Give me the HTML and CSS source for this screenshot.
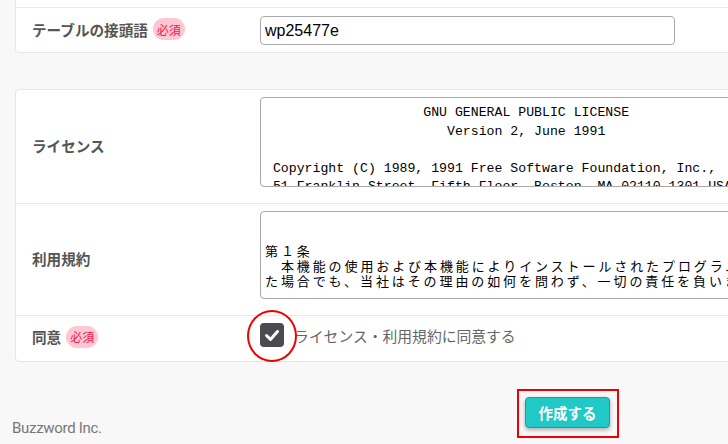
FILE: index.html
```html
<!DOCTYPE html>
<html lang="ja">
<head>
  <meta charset="UTF-8">
  <title>インストール設定</title>
  <link rel="stylesheet" href="styles.css">
</head>
<body>
  <div class="page">
    <section class="card card-top">
      <div class="row row-cut"></div>
      <div class="row row-input">
        <div class="row-label">テーブルの接頭語 <span class="badge">必須</span></div>
        <div class="row-value">
          <input type="text" class="text-input" value="wp25477e">
        </div>
      </div>
    </section>

    <section class="card">
      <div class="row row-tall">
        <div class="row-label">ライセンス</div>
        <div class="row-value">
          <textarea class="box-text license" readonly>                    GNU GENERAL PUBLIC LICENSE
                       Version 2, June 1991

 Copyright (C) 1989, 1991 Free Software Foundation, Inc.,
 51 Franklin Street, Fifth Floor, Boston, MA 02110-1301 USA
 Everyone is permitted to copy and distribute verbatim copies
 of this license document, but changing it is not allowed.</textarea>
        </div>
      </div>
      <div class="row row-tall">
        <div class="row-label">利用規約</div>
        <div class="row-value">
          <textarea class="box-text terms" readonly>


第１条
　本機能の使用および本機能によりインストールされたプログラムの使用により損害が発生し
た場合でも、当社はその理由の如何を問わず、一切の責任を負いません。</textarea>
        </div>
      </div>
      <div class="row row-agree">
        <div class="row-label">同意 <span class="badge">必須</span></div>
        <div class="row-value">
          <label class="agree">
            <span class="check-box">
              <svg width="24" height="24" viewBox="0 0 24 24">
                <polyline points="6.5,12.5 10.5,16.5 17.5,8.5" fill="none" stroke="#fff" stroke-width="3" stroke-linecap="round" stroke-linejoin="round"/>
              </svg>
              <span class="mark-circle"></span>
            </span>
            ライセンス・利用規約に同意する
          </label>
        </div>
      </div>
    </section>

    <div class="actions">
      <div class="mark-box">
        <button type="submit" class="btn-create">作成する</button>
      </div>
    </div>
  </div>

  <div class="watermark">Buzzword Inc.</div>
</body>
</html>
```

FILE: styles.css
```css
html, body {
  margin: 0;
  height: 100%;
  overflow: hidden;
}

body {
  background-color: #f8f8f8;
  font-family: "Noto Sans CJK JP", "Noto Sans", sans-serif;
  color: #555;
  position: relative;
}

.page {
  width: 1106px;
  margin-left: 15px;
}

.card {
  background-color: #fff;
  border: 1px solid #e6e6e6;
  border-radius: 4px;
  margin-top: 36px;
}

.card-top {
  margin-top: -12px;
}

.row {
  display: grid;
  grid-template-columns: 244px 1fr;
  border-top: 1px solid #e9e9e9;
}

.row:first-child {
  border-top: none;
}

.row-cut {
  height: 18px;
}

.row-label {
  align-self: center;
  padding-left: 16px;
  padding-bottom: 2px;
  font-size: 14.6px;
  font-weight: bold;
  color: #555;
  display: flex;
  align-items: center;
  gap: 5px;
}

.badge {
  display: inline-flex;
  align-items: center;
  justify-content: center;
  width: 32px;
  height: 22px;
  border-radius: 11px;
  background-color: #ffc6d4;
  color: #f0164f;
  font-size: 12px;
  font-weight: normal;
}

.row-input .row-value {
  padding: 8px 0 7px;
}

.text-input {
  display: block;
  width: 415px;
  height: 29px;
  box-sizing: border-box;
  border: 1px solid #a9a9a9;
  border-radius: 4px;
  padding: 0 4px;
  font-family: "Liberation Sans", Arial, sans-serif;
  font-size: 16px;
  color: #000;
}

.row-tall .row-value {
  padding: 7px 0 16px;
}

.box-text {
  display: block;
  width: 900px;
  box-sizing: border-box;
  border: 1px solid #a9a9a9;
  border-radius: 4px;
  padding: 6px 4px 0;
  resize: none;
  overflow: hidden;
  color: #000;
  background: #fff;
}

.license {
  height: 90px;
  font-family: "Liberation Mono", monospace;
  font-size: 13.2px;
  line-height: 18.5px;
}

.terms {
  height: 88px;
  padding-top: 1px;
  font-family: "Noto Sans CJK JP", sans-serif;
  font-size: 13px;
  line-height: 15px;
  letter-spacing: 2.9px;
}

.row-agree .row-value {
  padding: 7px 0 14px;
}

.row-agree .row-label {
  padding-bottom: 4px;
}

.agree {
  display: flex;
  align-items: center;
  gap: 10px;
  font-size: 14.8px;
  color: #666;
}

.check-box {
  position: relative;
  width: 24px;
  height: 24px;
  border-radius: 4px;
  background-color: #4b4a50;
  display: block;
}

.check-box svg {
  display: block;
}

.mark-circle {
  position: absolute;
  left: -13px;
  top: -13px;
  width: 46px;
  height: 48px;
  border: 2px solid #ee0000;
  border-radius: 50%;
}

.actions {
  display: flex;
  justify-content: center;
  margin-top: 27px;
}

.mark-box {
  border: 2px solid #ee0000;
  padding: 6px 7px 8px 6px;
}

.btn-create {
  display: block;
  width: 85px;
  height: 31px;
  box-sizing: border-box;
  background-color: #20c9c6;
  border: 1px solid #1a9f9c;
  border-radius: 4px;
  box-shadow: 0 2px 4px rgba(0, 0, 0, 0.3);
  color: #fff;
  font-family: "Noto Sans CJK JP", sans-serif;
  font-size: 14.5px;
  font-weight: bold;
  padding: 0;
}

.watermark {
  position: absolute;
  left: 12px;
  top: 419px;
  font-family: Roboto, "Liberation Sans", sans-serif;
  font-size: 15px;
  color: #777;
  letter-spacing: -0.3px;
}
```
